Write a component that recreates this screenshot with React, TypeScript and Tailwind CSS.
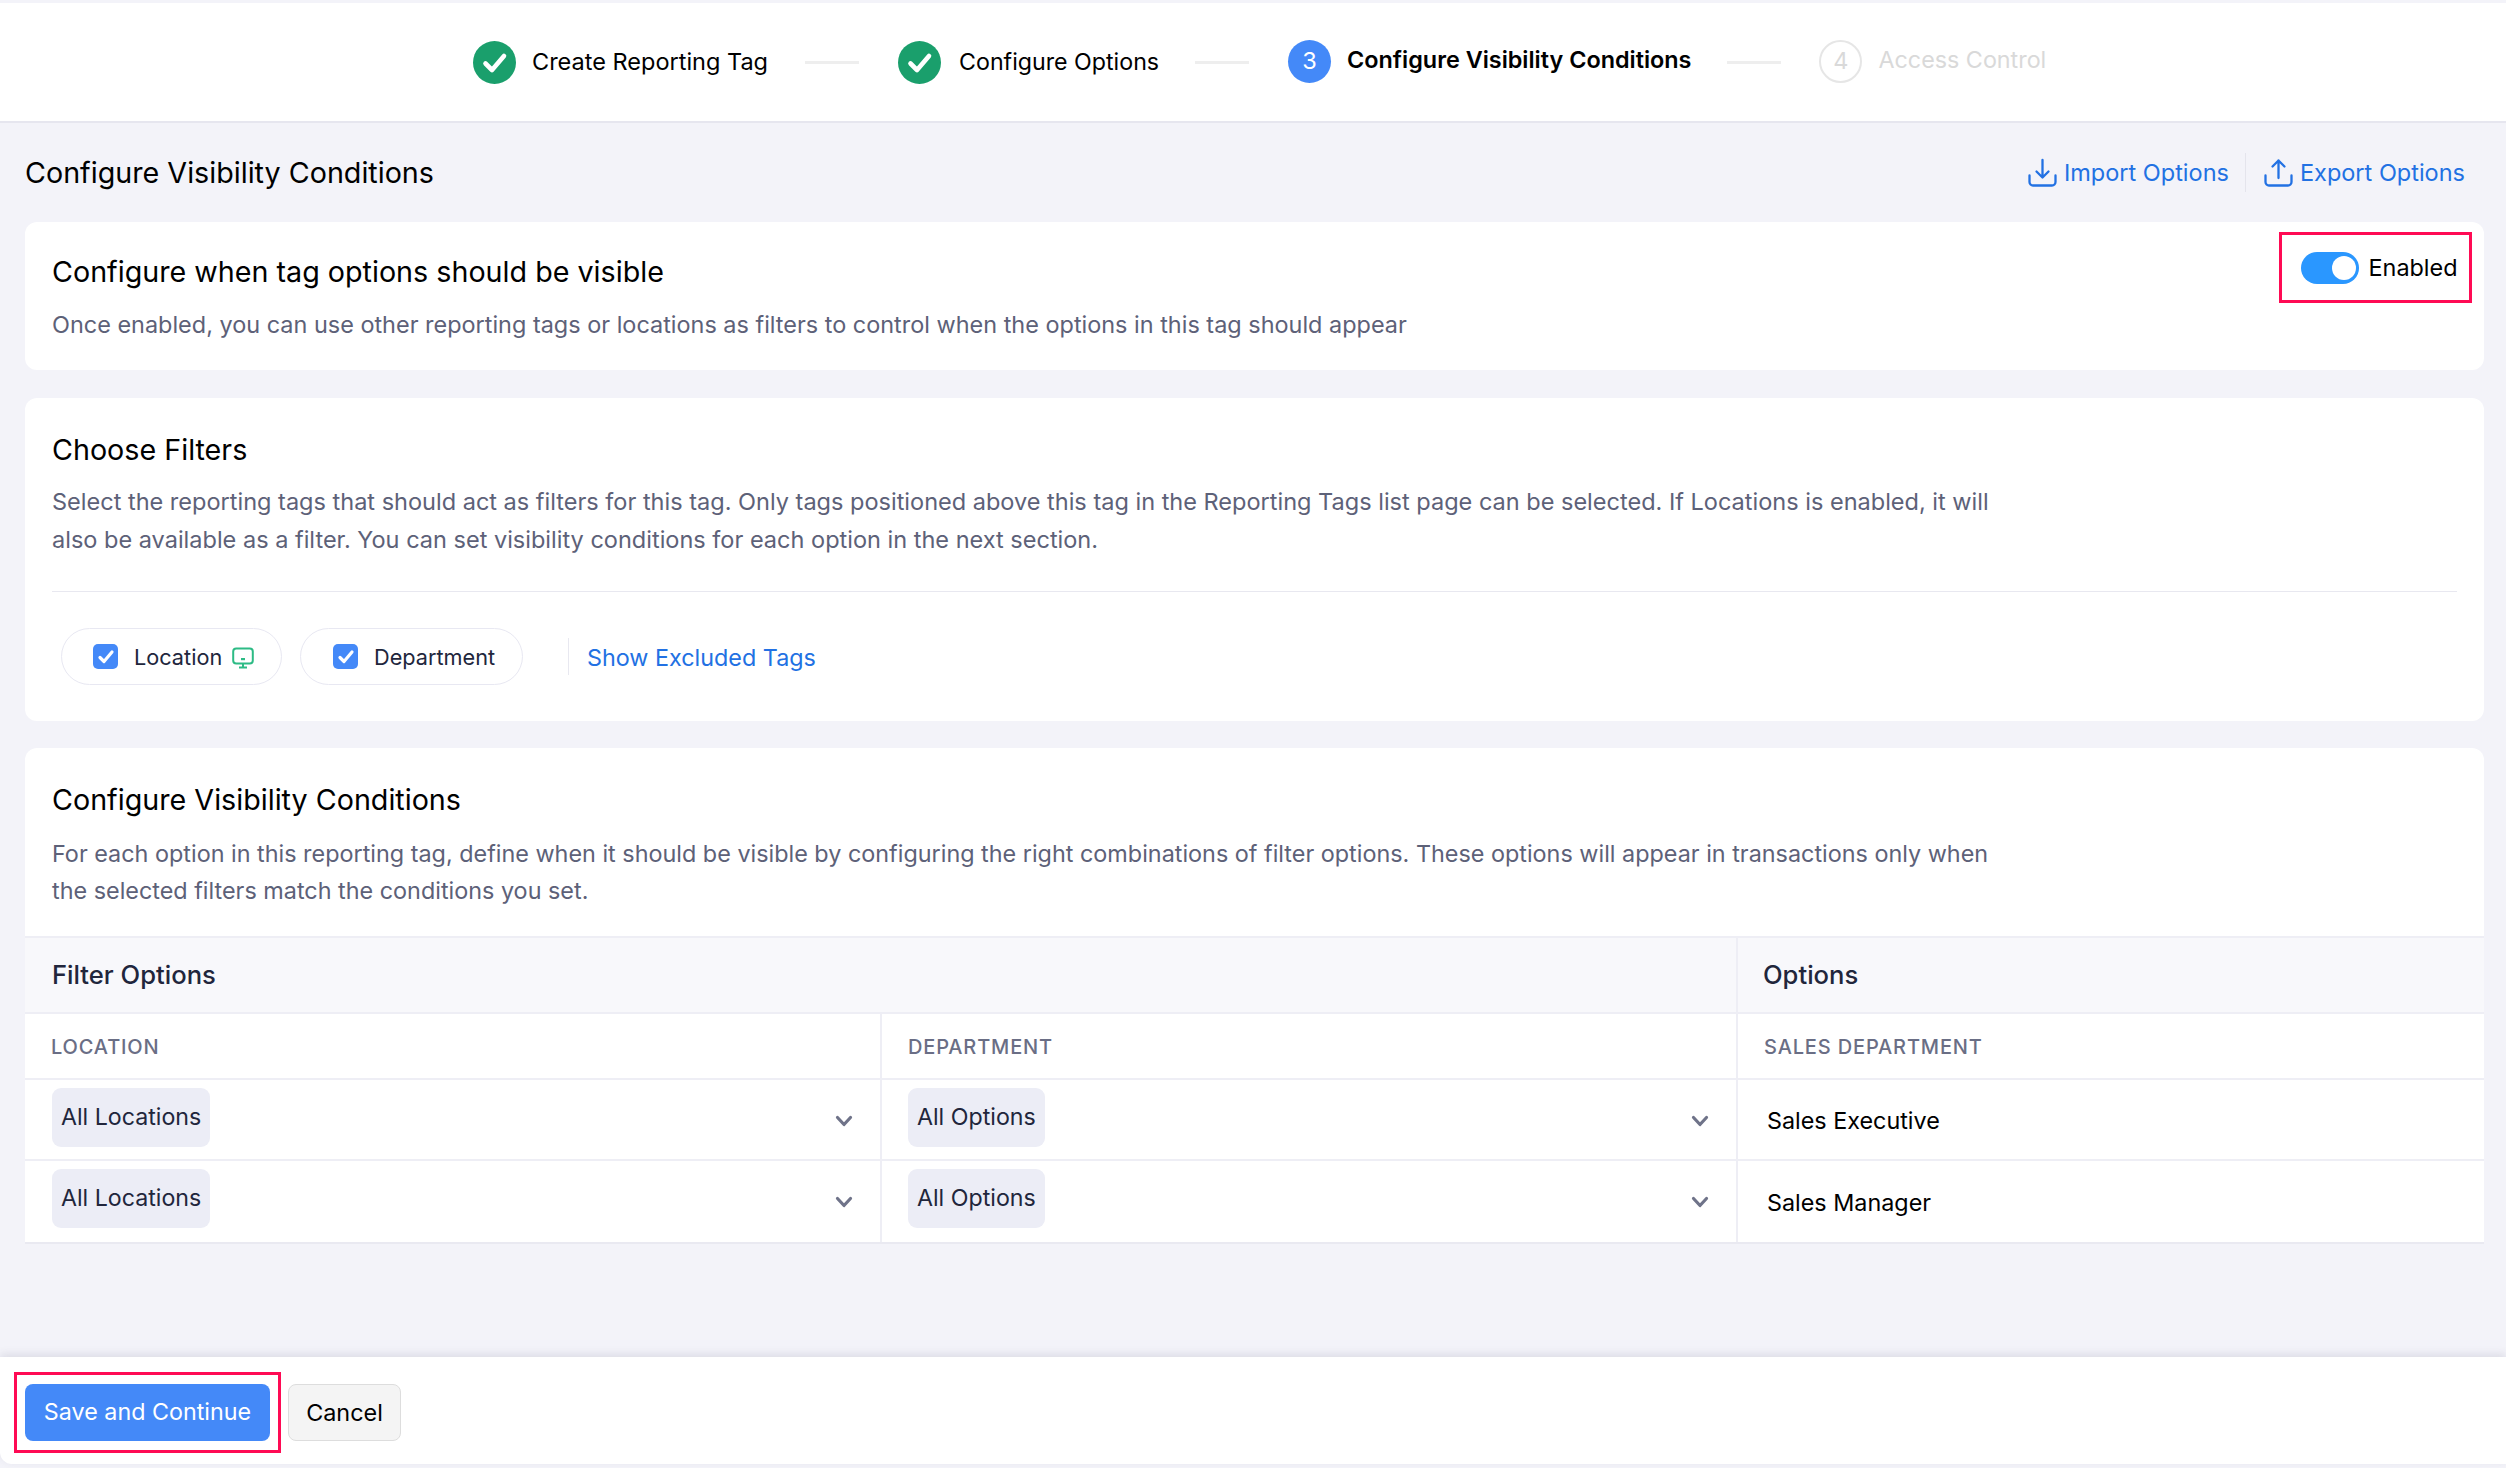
import React from "react";

const Check = ({ size = 43 }: { size?: number }) => (
  <svg width={size} height={size} viewBox="0 0 43 43" className="shrink-0">
    <circle cx="21.5" cy="21.5" r="21.5" fill="#1a9f6c" />
    <path d="M12.5 22.5l6.5 6.5 12-14" fill="none" stroke="#fff" strokeWidth="4.6" strokeLinecap="round" strokeLinejoin="round" />
  </svg>
);

const Chevron = () => (
  <svg width="18" height="12" viewBox="0 0 18 12" className="shrink-0">
    <path d="M2.5 2.5L9 9.5l6.5-7" fill="none" stroke="#6f7389" strokeWidth="3.2" strokeLinecap="round" strokeLinejoin="round" />
  </svg>
);

const Box = () => (
  <span className="flex h-[25px] w-[25px] shrink-0 items-center justify-center rounded-[5px] bg-[#4489f8]">
    <svg width="20" height="20" viewBox="0 0 20 20">
      <path d="M4 10.5l4 4 8-9.5" fill="none" stroke="#fff" strokeWidth="3.2" strokeLinecap="round" strokeLinejoin="round" />
    </svg>
  </span>
);

const Tray = ({ up }: { up?: boolean }) => (
  <svg width="29" height="29" viewBox="0 0 29 29" className="shrink-0">
    <path d="M1.5 17.5v6.5a3.5 3.5 0 0 0 3.5 3.5h19a3.5 3.5 0 0 0 3.5-3.5v-6.5" fill="none" stroke="#2271e3" strokeWidth="2.3" strokeLinecap="round" />
    {up ? (
      <path d="M14.5 20V2.5M8.5 8.5l6-6 6 6" fill="none" stroke="#2271e3" strokeWidth="2.3" strokeLinecap="round" strokeLinejoin="round" />
    ) : (
      <path d="M14.5 2V19.5M8.5 13.5l6 6 6-6" fill="none" stroke="#2271e3" strokeWidth="2.3" strokeLinecap="round" strokeLinejoin="round" />
    )}
  </svg>
);

const Monitor = () => (
  <svg width="22" height="22" viewBox="0 0 22 22" className="shrink-0">
    <rect x="1.2" y="1.5" width="19.6" height="15" rx="3" fill="none" stroke="#2dbb85" strokeWidth="2" />
    <rect x="9" y="11" width="4" height="2.2" fill="#2dbb85" />
    <path d="M11 16.5v3.5M7 20.5h8" stroke="#2dbb85" strokeWidth="2" fill="none" />
  </svg>
);

const Line = () => <span className="h-[3px] w-[54px] shrink-0 bg-[#eeeeee]" />;

const Filter = ({ w, first }: { w: string; first?: boolean }) => (
  <div className={`flex h-full items-start justify-between pr-[27px] pt-[8px] ${first ? "pl-[27px]" : "pl-[26px]"}`}>
    <span className="flex h-[59px] items-center rounded-[9px] bg-[#ecedf6] px-[9px] text-[23.2px] text-[#21263c]">{w}</span>
    <span className="mt-[27px]"><Chevron /></span>
  </div>
);

const rows = ["Sales Executive", "Sales Manager"];

export default function App() {
  return (
    <div className="flex h-[1468px] w-[2506px] flex-col overflow-hidden bg-[#f3f3f9] font-['Inter',sans-serif]">
      <header className="mt-[3px] flex h-[120px] shrink-0 items-center border-b-2 border-[#e6e6ef] bg-white pl-[473px]">
        <Check />
        <span className="ml-[16px] mr-[37px] text-[23.5px] text-black">Create Reporting Tag</span>
        <Line />
        <span className="ml-[39px]"><Check /></span>
        <span className="ml-[18px] mr-[36px] text-[23.2px] text-black">Configure Options</span>
        <Line />
        <span className="mb-[2px] ml-[39px] flex h-[43px] w-[43px] shrink-0 items-center justify-center rounded-full bg-[#4489f8] text-[23.5px] text-white">3</span>
        <span className="mb-[4px] ml-[16px] mr-[36px] text-[23.4px] font-semibold text-black">Configure Visibility Conditions</span>
        <Line />
        <span className="mb-[2px] ml-[38px] flex h-[43px] w-[43px] shrink-0 items-center justify-center rounded-full border-2 border-[#e6e6e6] text-[23.5px] text-[#d9d9d9]">4</span>
        <span className="mb-[4px] ml-[16px] text-[23.3px] text-[#d9d9d9]">Access Control</span>
      </header>

      <main className="flex flex-1 flex-col pl-[25px] pr-[22px]">
        <div className="flex h-[99px] shrink-0 items-center justify-between pr-[19px]">
          <h1 className="text-[28.7px] font-normal text-black">Configure Visibility Conditions</h1>
          <div className="flex items-center text-[23.5px] text-[#2271e3]">
            <Tray />
            <span className="ml-[7px]">Import Options</span>
            <span className="ml-[16px] mr-[18px] h-[39px] w-px bg-[#e4e4ec]" />
            <Tray up />
            <span className="ml-[7px]">Export Options</span>
          </div>
        </div>

        <section className="flex h-[148px] shrink-0 justify-between rounded-[12px] bg-white pl-[27px] pr-[12px] pt-[10px]">
          <div className="pt-[22px]">
            <h2 className="text-[28.7px] leading-[36px] text-black">Configure when tag options should be visible</h2>
            <p className="mt-[16px] text-[23.45px] leading-[38px] text-[#5d6178]">Once enabled, you can use other reporting tags or locations as filters to control when the options in this tag should appear</p>
          </div>
          <div className="flex h-[71px] w-[193px] items-center gap-[10px] border-[3.5px] border-[#ff0a54] pl-[18.5px]">
            <span className="flex h-[32px] w-[58px] items-center justify-end rounded-full bg-[#2a97ff] pr-[3px]">
              <span className="h-[24px] w-[24px] rounded-full bg-white" />
            </span>
            <span className="text-[23.4px] text-black">Enabled</span>
          </div>
        </section>

        <section className="mt-[28px] flex h-[323px] shrink-0 flex-col rounded-[12px] bg-white px-[27px]">
          <h2 className="mt-[34px] text-[28.7px] leading-[36px] text-black">Choose Filters</h2>
          <p className="mt-[15px] max-w-[1960px] text-[23.53px] leading-[38px] text-[#5d6178]">Select the reporting tags that should act as filters for this tag. Only tags positioned above this tag in the Reporting Tags list page can be selected. If Locations is enabled, it will also be available as a filter. You can set visibility conditions for each option in the next section.</p>
          <div className="mt-[32px] h-px w-full bg-[#e8e8f0]" />
          <div className="mt-[36px] flex items-center pl-[9px]">
            <span className="flex h-[57px] w-[221px] items-center rounded-full border border-[#e8e8f2] pl-[31px] text-[21.7px] text-[#21263c]">
              <Box />
              <span className="ml-[16px] mr-[10px] mt-[2px]">Location</span>
              <span className="mt-[2px]"><Monitor /></span>
            </span>
            <span className="ml-[18px] flex h-[57px] w-[223px] items-center rounded-full border border-[#e8e8f2] pl-[32px] text-[21.7px] text-[#21263c]">
              <Box />
              <span className="ml-[16px] mt-[2px]">Department</span>
            </span>
            <span className="ml-[45px] h-[37px] w-px bg-[#e8e8f0]" />
            <span className="ml-[18px] mt-[3px] text-[23.35px] text-[#2271e3]">Show Excluded Tags</span>
          </div>
        </section>

        <section className="mt-[27px] flex shrink-0 flex-col overflow-hidden rounded-t-[12px] border-b-2 border-[#e9e9f1] bg-white">
          <div className="h-[188px] px-[27px]">
            <h2 className="mt-[34px] text-[28.7px] leading-[36px] text-black">Configure Visibility Conditions</h2>
            <p className="mt-[17px] max-w-[1960px] text-[23.39px] leading-[37px] text-[#5d6178]">For each option in this reporting tag, define when it should be visible by configuring the right combinations of filter options. These options will appear in transactions only when the selected filters match the conditions you set.</p>
          </div>
          <div className="grid grid-cols-[855px_856px_1fr]">
            <div className="col-span-2 flex h-[78px] items-center border-y-2 border-[#eeeef5] bg-[#f8f8fb] pl-[27px] text-[25.6px] font-medium text-[#21263c]">Filter Options</div>
            <div className="flex h-[78px] items-center border-y-2 border-l-2 border-[#eeeef5] bg-[#f8f8fb] pl-[25px] text-[25.6px] font-medium text-[#21263c]">Options</div>
            {["LOCATION", "DEPARTMENT", "SALES DEPARTMENT"].map((h, i) => (
              <div key={h} className={`flex h-[66px] items-center border-b-2 border-[#eeeef5] pl-[26px] pt-[1px] text-[20px] font-medium tracking-[0.85px] text-[#6a6e85] ${i > 0 ? "border-l-2" : ""}`}>{h}</div>
            ))}
            {rows.map((r, i) => (
              <React.Fragment key={r}>
                <div className={`h-[81px] ${i === 0 ? "border-b-2 border-[#eeeef5]" : ""}`}><Filter w="All Locations" first /></div>
                <div className={`h-[81px] border-l-2 border-[#eeeef5] ${i === 0 ? "border-b-2" : ""}`}><Filter w="All Options" /></div>
                <div className={`flex h-[81px] items-center border-l-2 border-[#eeeef5] pl-[29px] pt-[3px] text-[23.35px] text-black ${i === 0 ? "border-b-2" : ""}`}>{r}</div>
              </React.Fragment>
            ))}
          </div>
        </section>
      </main>

      <footer className="mb-[4px] flex h-[107px] shrink-0 items-center rounded-bl-[12px] bg-white pl-[14px] pt-[4px] shadow-[0_-3px_8px_rgba(60,60,90,0.12)]">
        <div className="flex h-[81px] w-[267px] items-center justify-center border-[3.5px] border-[#ff0a54]">
          <button className="h-[57px] w-[245px] rounded-[8px] bg-[#4489f8] text-[23.3px] text-white">Save and Continue</button>
        </div>
        <button className="ml-[7px] h-[57px] w-[113px] rounded-[8px] border border-[#dddddd] bg-[#f4f4f4] text-[23.4px] text-black">Cancel</button>
      </footer>
    </div>
  );
}
